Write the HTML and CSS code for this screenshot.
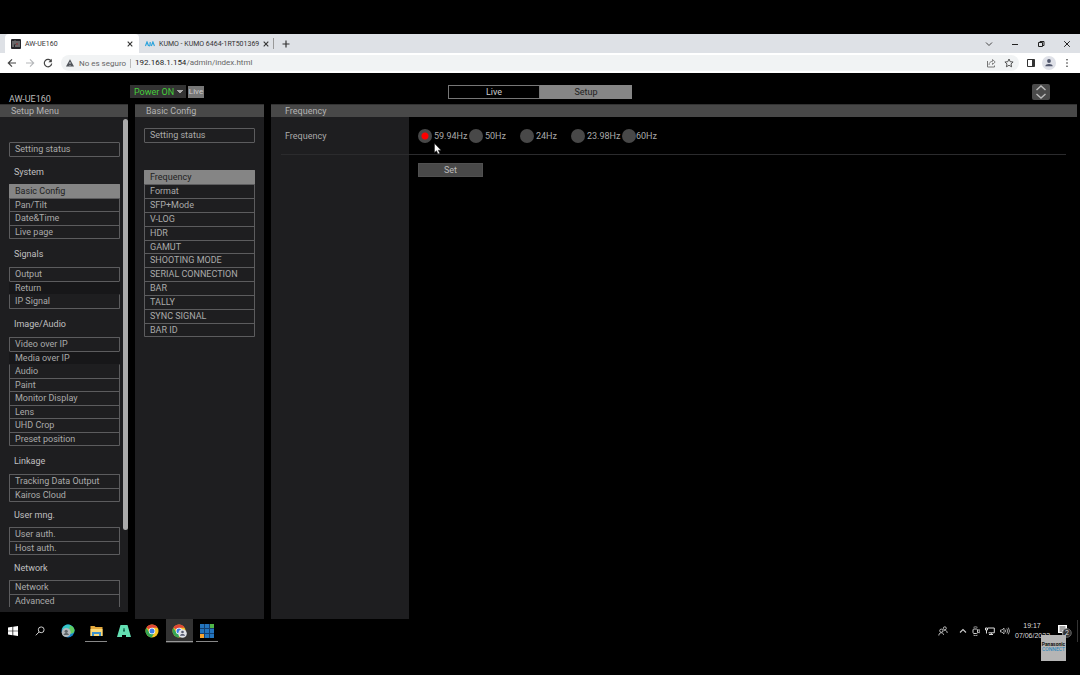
FILE: index.html
```html
<!DOCTYPE html>
<html lang="en">
<head>
<meta charset="utf-8">
<title>AW-UE160</title>
<link rel="stylesheet" href="styles.css">
</head>
<body>
<div class="screen">
  <div class="tabstrip">
    <div class="tab tab-active">
      <svg class="ico" width="10" height="10" viewBox="0 0 10 10"><rect width="10" height="10" rx="1" fill="#26262a"/><path d="M2 2v6M4 1.500v4M6 2v2M8 2v6M4 7h3" stroke="#aaa" stroke-width="1"/><path d="M5 5h2" stroke="#d66" stroke-width="1"/></svg>
      <span class="tab-title">AW-UE160</span>
      <button class="plain" aria-label="Close tab"><svg width="6" height="6" viewBox="0 0 6 6"><path d="M.7.7l4.600 4.600M5.300.7L.7 5.300" stroke="#333" stroke-width="1.100"/></svg></button>
    </div>
    <div class="tab tab-back">
      <svg class="ico" width="10" height="6" viewBox="0 0 10 6"><path d="M.4 5L2 1l1.600 4M4 5c1 0 1.200-.5 1.200-4M6.300 5L7.900 1l1.600 4" fill="none" stroke="#2ba3dc" stroke-width="1.200"/></svg>
      <span class="tab-title">KUMO - KUMO 6464-1RT501369</span>
      <button class="plain" aria-label="Close tab"><svg width="6" height="6" viewBox="0 0 6 6"><path d="M.7.7l4.600 4.600M5.300.7L.7 5.300" stroke="#333" stroke-width="1.100"/></svg></button>
    </div>
    <button class="plain newtab" aria-label="New tab"><svg width="8" height="8" viewBox="0 0 8 8"><path d="M4 .5v7M.5 4h7" stroke="#333" stroke-width="1.200"/></svg></button>
    <div class="winctl">
      <button class="plain" aria-label="Search tabs"><svg width="8" height="8" viewBox="0 0 8 8"><path d="M1 2.500l3 3 3-3" fill="none" stroke="#444"/></svg></button>
      <button class="plain" aria-label="Minimize"><svg width="8" height="8" viewBox="0 0 8 8"><path d="M1 4.500h6" stroke="#222"/></svg></button>
      <button class="plain" aria-label="Restore"><svg width="8" height="8" viewBox="0 0 8 8"><path d="M1.500 2.500h4v4h-4zM3 2.500v-1h4v4H5.500" fill="none" stroke="#222"/></svg></button>
      <button class="plain" aria-label="Close window"><svg width="8" height="8" viewBox="0 0 8 8"><path d="M1.200 1.200l5.600 5.600M6.800 1.200L1.200 6.800" stroke="#222"/></svg></button>
    </div>
  </div>

  <div class="toolbar">
    <div class="navbtns">
      <button class="plain" aria-label="Back"><svg width="10" height="10" viewBox="0 0 10 10"><path d="M9 5H1.500M5 1.300L1.300 5 5 8.700" fill="none" stroke="#444" stroke-width="1.200"/></svg></button>
      <button class="plain" aria-label="Forward"><svg width="10" height="10" viewBox="0 0 10 10"><path d="M1 5h7.500M5 1.300L8.700 5 5 8.700" fill="none" stroke="#b5b7ba" stroke-width="1.100"/></svg></button>
      <button class="plain" aria-label="Reload"><svg width="10" height="10" viewBox="0 0 10 10"><path d="M8.200 3.200A3.700 3.700 0 1 0 8.700 5.500" fill="none" stroke="#444" stroke-width="1.200"/><path d="M8.800.8v3.400H5.400z" fill="#444"/></svg></button>
    </div>
    <div class="address">
      <svg width="8" height="8" viewBox="0 0 8 8"><path d="M4 .3L8 7.600H0z" fill="#50545a"/><path d="M4 3v2M4 6v.8" stroke="#f1f3f4" stroke-width=".8"/></svg>
      <span class="insecure">No es seguro</span>
      <span class="url"><b>192.168.1.154</b>/admin/index.html</span>
      <button class="plain share" aria-label="Share"><svg width="10" height="10" viewBox="0 0 10 10"><path d="M1.500 3v6h7V7.500" fill="none" stroke="#777"/><path d="M3 7c.2-2.500 1.500-3.600 3.500-3.600V1.500L9.200 4 6.500 6.500V4.800" fill="none" stroke="#777" stroke-width=".9"/></svg></button>
      <button class="plain star" aria-label="Bookmark"><svg width="10" height="10" viewBox="0 0 10 10"><path d="M5 1l1.200 2.700 2.900.3L7 5.900l.6 2.900L5 7.300 2.400 8.800 3 5.900.9 4l2.900-.3z" fill="none" stroke="#444" stroke-width=".9"/></svg></button>
    </div>
    <div class="barbtns">
      <button class="plain" aria-label="Side panel"><svg width="10" height="10" viewBox="0 0 10 10"><path d="M1.500 1.500h7v7h-7z" fill="none" stroke="#333"/><path d="M6 1.500h2.500v7H6z" fill="#333"/></svg></button>
      <button class="plain" aria-label="Profile"><svg width="14" height="14" viewBox="0 0 14 14"><circle cx="7" cy="7" r="7" fill="#dfe1e8"/><circle cx="7" cy="5" r="1.900" fill="#50566c"/><path d="M3.300 10.200c0-2.800 7.400-2.800 7.400 0z" fill="#50566c"/></svg></button>
      <button class="plain" aria-label="Menu"><svg width="10" height="10" viewBox="0 0 10 10"><circle cx="5" cy="1.800" r=".8" fill="#333"/><circle cx="5" cy="5" r=".8" fill="#333"/><circle cx="5" cy="8.200" r=".8" fill="#333"/></svg></button>
    </div>
  </div>

  <header class="apphead">
    <div class="headleft">
      <span class="model">AW-UE160</span>
      <select class="power" aria-label="Power"><option>Power ON</option></select>
      <span class="livechip">Live</span>
    </div>
    <nav class="modes">
      <button class="mode">Live</button>
      <button class="mode mode-on">Setup</button>
    </nav>
    <button class="plain expand" aria-label="Expand"><svg width="18" height="16" viewBox="0 0 18 16"><rect width="18" height="16" rx="2" fill="#4a4a4a"/><path d="M4.500 6L9 2l4.500 4M4.500 10L9 14l4.500-4" fill="none" stroke="#bbb" stroke-width="1.400"/></svg></button>
  </header>

  <div class="panels">
    <aside class="side">
      <h2 class="bar">Setup Menu</h2>
      <div class="sidebody">
        <nav class="sidemenu">
          <a class="status" href="#">Setting status</a>
          <h3>System</h3>
          <ul class="menu"><li class="on"><a href="#">Basic Config</a></li><li><a href="#">Pan/Tilt</a></li><li><a href="#">Date&amp;Time</a></li><li><a href="#">Live page</a></li></ul>
          <h3>Signals</h3>
          <ul class="menu"><li><a href="#">Output</a></li><li class="sub"><a href="#">Return</a></li><li class="after"><a href="#">IP Signal</a></li></ul>
          <h3>Image/Audio</h3>
          <ul class="menu"><li><a href="#">Video over IP</a></li><li class="sub"><a href="#">Media over IP</a></li><li class="after"><a href="#">Audio</a></li><li><a href="#">Paint</a></li><li><a href="#">Monitor Display</a></li><li><a href="#">Lens</a></li><li><a href="#">UHD Crop</a></li><li><a href="#">Preset position</a></li></ul>
          <h3>Linkage</h3>
          <ul class="menu"><li><a href="#">Tracking Data Output</a></li><li><a href="#">Kairos Cloud</a></li></ul>
          <h3 class="short">User mng.</h3>
          <ul class="menu"><li><a href="#">User auth.</a></li><li><a href="#">Host auth.</a></li></ul>
          <h3 class="short">Network</h3>
          <ul class="menu menu-open"><li><a href="#">Network</a></li><li><a href="#">Advanced</a></li></ul>
        </nav>
        <div class="scroll"></div>
      </div>
    </aside>

    <section class="config">
      <h2 class="bar">Basic Config</h2>
      <nav class="confmenu">
        <a class="status" href="#">Setting status</a>
        <ul class="menu menu-even"><li class="on"><a href="#">Frequency</a></li><li><a href="#">Format</a></li><li><a href="#">SFP+Mode</a></li><li><a href="#">V-LOG</a></li><li><a href="#">HDR</a></li><li><a href="#">GAMUT</a></li><li><a href="#">SHOOTING MODE</a></li><li><a href="#">SERIAL CONNECTION</a></li><li><a href="#">BAR</a></li><li><a href="#">TALLY</a></li><li><a href="#">SYNC SIGNAL</a></li><li><a href="#">BAR ID</a></li></ul>
      </nav>
    </section>

    <main class="main">
      <h2 class="bar">Frequency</h2>
      <form class="form">
        <div class="row">
          <span class="rowlabel" id="freq">Frequency</span>
          <div class="radios" role="radiogroup" aria-labelledby="freq">
            <label><input type="radio" name="f" checked>59.94Hz</label>
            <label><input type="radio" name="f">50Hz</label>
            <label><input type="radio" name="f">24Hz</label>
            <label><input type="radio" name="f">23.98Hz</label>
            <label class="close"><input type="radio" name="f">60Hz</label>
            <svg class="cursor" width="8" height="12" viewBox="0 0 8 12"><path d="M.5.5v9l2-1.800L4 11l1.700-.8-1.500-3H7z" fill="#fff" stroke="#222" stroke-width=".5"/></svg>
          </div>
        </div>
        <hr class="rule">
        <button class="set" type="button">Set</button>
      </form>
    </main>
  </div>

  <footer class="taskbar">
    <div class="apps">
      <button class="app start" aria-label="Start"><svg width="10" height="10" viewBox="0 0 10 10"><path d="M0 1.500l4.500-.7v3.900H0zM5.200.7L10 0v4.700H5.200zM0 5.300h4.500v3.900L0 8.500zM5.200 5.300H10V10l-4.800-.7z" fill="#fff"/></svg></button>
      <button class="app" aria-label="Search"><svg width="10" height="10" viewBox="0 0 10 10"><circle cx="6.200" cy="3.800" r="2.900" fill="none" stroke="#ccc"/><path d="M4 6L.8 9.300" stroke="#ccc"/></svg></button>
      <button class="app" aria-label="Edge"><svg width="14" height="14" viewBox="0 0 14 14"><circle cx="7" cy="7" r="6.500" fill="#1683c9"/><path d="M1 5C3-1 11-1 13 5c1 3-1 5-4 5L6 6z" fill="#35c6c7"/><path d="M9 1.500c4 1 6 5 3 7.500l-3 .8L8 6z" fill="#61ce62"/><circle cx="5.200" cy="8.500" r="4.500" fill="#b4b9bc"/><circle cx="5.200" cy="7.300" r="1.600" fill="#60666a"/><path d="M2.500 11c.5-2.600 5-2.600 5.400 0z" fill="#60666a"/></svg></button>
      <button class="app open" aria-label="Files"><svg width="13" height="12" viewBox="0 0 13 12"><path d="M.5 1h4l1 1h7v9H.5z" fill="#e5a93c"/><path d="M.5 4h12v7H.5z" fill="#fbd978"/><path d="M2 11V7h9v4H9V9H4v2z" fill="#3d91cc"/></svg></button>
      <button class="app" aria-label="Arsenal"><svg width="14" height="12" viewBox="0 0 14 12"><path d="M3.500 0h7L14 12H9V10H5v2H0z" fill="#63dfb2"/><path d="M6.600 3h.8L8 6.500H6z" fill="#0b5a42"/></svg></button>
      <button class="app" aria-label="Chrome"><svg width="14" height="14" viewBox="0 0 14 14"><circle cx="7" cy="7" r="6.500" fill="#f6c526"/><path d="M7 7L1.400 3.700A6.500 6.500 0 0 1 12.600 3.700H7z" fill="#df4636"/><path d="M1.400 3.700A6.500 6.500 0 0 0 6.700 13.500L9.500 8.500 7 7 4 8z" fill="#35a653"/><circle cx="7" cy="7" r="3.200" fill="#fff"/><circle cx="7" cy="7" r="2.500" fill="#3c7de6"/></svg></button>
      <button class="app open current" aria-label="Chrome profile"><svg width="16" height="14" viewBox="0 0 16 14"><circle cx="7" cy="7" r="6.500" fill="#f6c526"/><path d="M7 7L1.400 3.700A6.500 6.500 0 0 1 12.600 3.700H7z" fill="#df4636"/><path d="M1.400 3.700A6.500 6.500 0 0 0 6.700 13.500L9.500 8.500 7 7 4 8z" fill="#35a653"/><circle cx="7" cy="7" r="3.200" fill="#fff"/><circle cx="7" cy="7" r="2.500" fill="#3c7de6"/><circle cx="10.500" cy="9.500" r="4.300" fill="#dfe2e8"/><circle cx="10.500" cy="8" r="1.300" fill="#555b70"/><path d="M8 11.800c0-2.500 5-2.500 5 0z" fill="#555b70"/></svg></button>
      <button class="app open" aria-label="Matrix"><svg width="14" height="14" viewBox="0 0 14 14"><rect width="14" height="14" fill="#123f70"/><path d="M0 0h4v4H0zM5 0h4v4H5zM0 5h4v4H0zM5 5h4v4H5zM10 5h4v4h-4zM5 10h4v4H5zM10 10h4v4h-4z" fill="#2374bd"/><path d="M10 0h4v4h-4z" fill="#4fb548"/><path d="M0 10h4v4H0z" fill="#f6a22d"/></svg></button>
    </div>
    <div class="tray">
      <svg class="people" width="10" height="10" viewBox="0 0 10 10"><g fill="none" stroke="#ccc" stroke-width=".9"><circle cx="3.300" cy="4.700" r="1.600"/><path d="M.8 9.500c0-3.600 4.500-3.600 4.800-.7"/><circle cx="6.800" cy="2.300" r="1.500"/><path d="M5.500 5c1.800-1.500 3.600-.3 3.700 2"/></g></svg>
      <svg width="8" height="8" viewBox="0 0 8 8"><path d="M1 5.500l3-3 3 3" fill="none" stroke="#ccc" stroke-width="1.100"/></svg>
      <svg width="8" height="10" viewBox="0 0 8 10"><rect x="1" y="3" width="4.500" height="4.500" rx="1" fill="none" stroke="#ccc"/><path d="M5.500 4.500L7.300 3.500v3.500L5.500 6M1.500 1.300q2-1 4 0M1.500 9.200q2 1 4 0" fill="none" stroke="#ccc" stroke-width=".8"/></svg>
      <svg width="10" height="8" viewBox="0 0 10 8"><path d="M3 1h6.300v4.800H3.500M6.300 6v1.500M4 7.500h4M.5 1h2v2h-2zM1.500 3v3.500" fill="none" stroke="#ddd"/></svg>
      <svg width="10" height="8" viewBox="0 0 10 8"><path d="M.5 3h1.500l2-2v6L2 5H.5zM5.300 2.700q1 1.300 0 2.600M6.800 1.500q2 2.500 0 5M8.300.6q2.400 3.400 0 6.800" fill="none" stroke="#ccc" stroke-width=".8"/></svg>
      <time class="clock">19:17<br>07/06/2023</time>
      <div class="notify">
        <svg width="14" height="14" viewBox="0 0 14 14"><path d="M0 1h9v8H6l-2 2V9H0z" fill="#fff"/><path d="M1.500 3h6M1.500 5h6M1.500 7h3" stroke="#333" stroke-width=".9"/><circle cx="9" cy="9" r="4.300" fill="#333" stroke="#777" stroke-width=".8"/></svg>
        <span class="count">2</span>
      </div>
      <div class="edge"></div>
    </div>
    <div class="brand"><b>Panasonic</b><span>CONNECT</span></div>
  </footer>
</div>
</body>
</html>
```

FILE: styles.css
```css
* { box-sizing: border-box; }
body { margin: 0; background: #000; color: #aaa; font: 9px/12px Roboto, "Liberation Sans", sans-serif; }
button, select, input { font: inherit; margin: 0; color: inherit; }
a { color: inherit; text-decoration: none; }
ul { list-style: none; margin: 0; padding: 0; }
h2, h3 { margin: 0; font-size: 9px; font-weight: 400; }
svg { display: block; flex: none; }
.screen { display: flex; flex-direction: column; min-height: 100vh; padding: 34px 0 32px; }
.plain { display: flex; align-items: center; justify-content: center; padding: 0; border: 0; background: none; }

/* Browser tabs */
.tabstrip { display: flex; align-items: center; height: 19px; padding-left: 5px; background: #dee1e6; color: #333; font-size: 7px; }
.tab { display: flex; align-items: center; gap: 4px; }
.tab-title { flex: 1; white-space: nowrap; }
.tab-active { width: 134px; height: 19px; padding: 0 6px; border-radius: 4px 4px 0 0; background: #fff; }
.tab-back { width: 135px; height: 11px; padding: 0 5px 0 6px; border-right: 1px solid #999; }
.newtab { width: 24px; }
.winctl { display: flex; gap: 18px; margin-left: auto; padding-right: 9px; }

/* Browser toolbar */
.toolbar { display: flex; align-items: center; height: 20px; background: #fff; color: #666; font-size: 8px; }
.navbtns { display: flex; gap: 8px; padding: 0 8px 0 7px; }
.address { flex: 1; display: flex; align-items: center; height: 16px; padding: 0 5px; border-radius: 8px; background: #f1f3f4; }
.insecure { margin: 0 4px 0 5px; padding-right: 4px; border-right: 1px solid #bbb; line-height: 9px; white-space: nowrap; }
.url { white-space: nowrap; }
.url b { font-weight: 400; color: #222; }
.share { margin-left: auto; }
.star { margin-left: 8px; }
.barbtns { display: flex; gap: 6px; align-items: center; padding: 0 8px 0 7px; }

/* Camera header */
.apphead { display: grid; grid-template-columns: 1fr 184px 1fr; height: 31px; padding-top: 12px; align-items: start; }
.headleft { display: flex; align-items: flex-start; }
.model { flex: none; width: 121px; margin: 8px 0 0 9px; color: #bbb; }
.power { width: 56px; height: 13px; padding: 1px 0 0 4px; border: 0; border-radius: 0; color: #45cf3a; appearance: none; line-height: 12px;
  background: linear-gradient(135deg, #aaa 50%, transparent 50%) right 3px top 5px / 3px 4px no-repeat, linear-gradient(225deg, #aaa 50%, transparent 50%) right 6px top 5px / 3px 4px no-repeat, #333; }
.livechip { width: 16px; height: 12px; margin: 1px 0 0 2px; background: #777; color: #ccc; font-size: 8px; text-align: center; }
.modes { display: flex; }
.mode { flex: 1; height: 14px; padding: 0; border: 1px solid #777; background: #000; color: #ccc; line-height: 12px; }
.mode-on { background: #858585; border-color: #858585; color: #222; }
.expand { margin: -1px 30px 0 auto; }

/* Panels */
.panels { flex: 1; display: grid; grid-template-columns: 128px 129px 1fr; column-gap: 7px; padding-right: 3px; }
.bar { height: 13px; padding-left: 11px; border-top: 1px solid #333; background: #484848; color: #b4b4b4; }
.side, .config { display: flex; flex-direction: column; background: #1e1e20; }
.side { margin-bottom: 7px; }
.sidebody { flex: 1; display: flex; justify-content: space-between; padding-top: 2px; }
.scroll { width: 5px; height: 411px; border-radius: 3px; background: #aaa; }
.sidemenu { flex: 1; padding: 23px 3px 0 9px; }
.confmenu { padding: 11px 9px 0; }
.status { display: block; height: 15px; padding-left: 5px; border: 1px solid #5c5c5e; border-radius: 1px; line-height: 13px; }
.sidemenu h3 { height: 28px; padding-left: 5px; line-height: 30px; color: #c0c0c0; }
.sidemenu .status + h3 { height: 27px; }
.sidemenu .short { height: 25px; line-height: 26px; }
.menu { border-bottom: 1px solid #5c5c5e; border-radius: 1px; }
.menu li { height: 13px; padding-left: 5px; border: 1px solid #5c5c5e; border-bottom: 0; line-height: 12px; }
.menu li:nth-child(odd), .menu-even li:nth-child(n) { height: 14px; }
.menu-even li:nth-child(6n) { height: 13px; }
.menu li:first-child { border-radius: 1px 1px 0 0; }
.menu-open { border-bottom: 0; }
.menu .on { background: #858585; border-color: #858585; color: #222; }
.menu .sub { border-left-color: #171719; border-right-color: #171719; background: #171719; }
.menu .after { border-top-color: #1e1e20; }
.confmenu .menu { margin-top: 27px; }

/* Frequency form */
.main { display: flex; flex-direction: column; min-width: 0; }
.main .bar { padding-left: 14px; }
.form { flex: 1; background: linear-gradient(to right, #1e1e20 138px, #000 138px); }
.row { display: grid; grid-template-columns: 147px 1fr; align-items: center; height: 37px; }
.rowlabel { padding-left: 14px; }
.radios { position: relative; display: grid; grid-template-columns: repeat(5, 51px); }
.radios label { display: flex; align-items: center; gap: 2px; white-space: nowrap; }
.radios .close { gap: 0; }
.radios input { flex: none; width: 14px; height: 14px; border-radius: 50%; appearance: none; background: #484848; }
.radios input:checked { background: radial-gradient(circle, #f00 3px, #484848 4px); }
.cursor { position: absolute; left: 16px; top: 14px; }
.rule { height: 1px; margin: 0 11px 0 10px; border: 0; background: #2b2b2d; }
.set { display: block; width: 65px; height: 14px; margin: 8px 0 0 147px; padding: 0; border: 1px solid #505050; background: #484848; color: #bbb; line-height: 12px; }

/* Taskbar */
.taskbar { position: relative; display: flex; justify-content: space-between; height: 24px; color: #ddd; }
.apps { display: flex; }
.app { display: flex; align-items: center; justify-content: center; width: 28px; height: 24px; padding: 0; border: 0; background: none; }
.start { width: 26px; }
.open { background: linear-gradient(#888, #888) center bottom 1px / 22px 1px no-repeat; }
.current { width: 27px; background: linear-gradient(#999, #999) center bottom 1px / 27px 1px no-repeat, #333; }
.tray { display: flex; align-items: center; gap: 5px; }
.people { margin-right: 6px; }
.clock { width: 34px; font: 7px/10px "Liberation Sans", sans-serif; text-align: center; }
.notify { position: relative; margin-left: 4px; }
.count { position: absolute; left: 7px; top: 5px; font-size: 7px; line-height: 8px; }
.edge { width: 1px; height: 22px; margin-right: 2px; background: #333; }
.brand { position: absolute; right: 14px; top: 16px; display: flex; flex-direction: column; justify-content: center; width: 25px; height: 26px; padding-bottom: 2px; background: #b5b5b5; color: #111; font: 5px/5px Roboto, sans-serif; text-align: center; }
.brand span { color: #1782bd; }
```
